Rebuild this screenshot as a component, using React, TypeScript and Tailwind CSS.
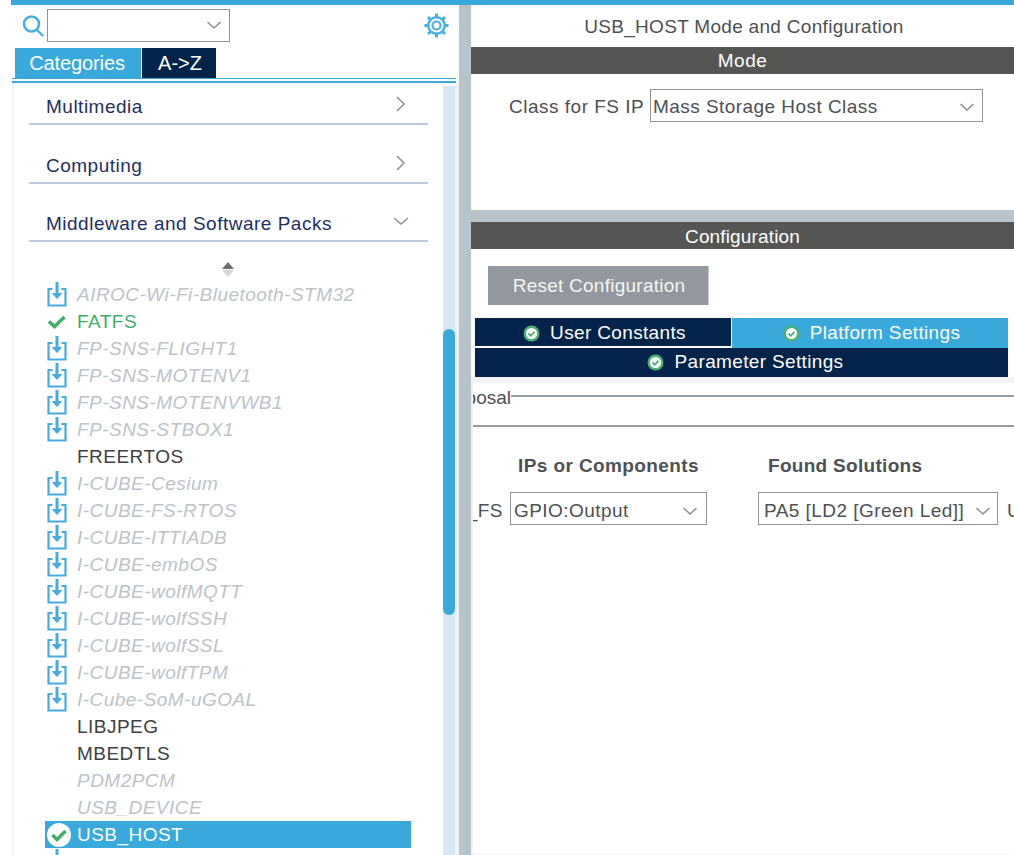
import React from 'react';

const font = { fontFamily: '"Liberation Sans", Arial, sans-serif' };

type Kind = 'pack' | 'ok' | 'plain' | 'off' | 'selected';

const items: { name: string; kind: Kind }[] = [
  { name: 'AIROC-Wi-Fi-Bluetooth-STM32', kind: 'pack' },
  { name: 'FATFS', kind: 'ok' },
  { name: 'FP-SNS-FLIGHT1', kind: 'pack' },
  { name: 'FP-SNS-MOTENV1', kind: 'pack' },
  { name: 'FP-SNS-MOTENVWB1', kind: 'pack' },
  { name: 'FP-SNS-STBOX1', kind: 'pack' },
  { name: 'FREERTOS', kind: 'plain' },
  { name: 'I-CUBE-Cesium', kind: 'pack' },
  { name: 'I-CUBE-FS-RTOS', kind: 'pack' },
  { name: 'I-CUBE-ITTIADB', kind: 'pack' },
  { name: 'I-CUBE-embOS', kind: 'pack' },
  { name: 'I-CUBE-wolfMQTT', kind: 'pack' },
  { name: 'I-CUBE-wolfSSH', kind: 'pack' },
  { name: 'I-CUBE-wolfSSL', kind: 'pack' },
  { name: 'I-CUBE-wolfTPM', kind: 'pack' },
  { name: 'I-Cube-SoM-uGOAL', kind: 'pack' },
  { name: 'LIBJPEG', kind: 'plain' },
  { name: 'MBEDTLS', kind: 'plain' },
  { name: 'PDM2PCM', kind: 'off' },
  { name: 'USB_DEVICE', kind: 'off' },
  { name: 'USB_HOST', kind: 'selected' },
];

const Caret = () => (
  <svg width="16" height="10" viewBox="0 0 16 10" fill="none" stroke="#8c9196" strokeWidth="1.6">
    <path d="M1.5 2 L8 8 L14.5 2" />
  </svg>
);

const PackIcon = () => (
  <svg width="20" height="25" viewBox="0 0 20 25" fill="none" stroke="#46abe0" strokeWidth="2.2">
    <path d="M5.5 7 H1.5 V23.5 H18.5 V7 H14.5" />
    <path d="M10 0 V14" strokeWidth="3" />
    <path d="M5.5 11.5 L10 16.5 L14.5 11.5 Z" fill="#46abe0" strokeWidth="1" />
  </svg>
);

const Tick = () => (
  <svg width="20" height="14" viewBox="0 0 20 14" fill="none" stroke="#3fae68" strokeWidth="3.6">
    <path d="M2 6.5 L7.5 11.5 L17.5 2" />
  </svg>
);

const RoundTick = ({ big }: { big?: boolean }) =>
  big ? (
    <svg width="26" height="26" viewBox="0 0 26 26" fill="none" className="ml-[-1px]">
      <circle cx="13" cy="13" r="12" fill="#fff" />
      <path d="M6.5 13 L11 17.5 L19.5 9" stroke="#3fae68" strokeWidth="3.4" />
    </svg>
  ) : (
    <svg width="17" height="17" viewBox="0 0 17 17" fill="none">
      <circle cx="8.5" cy="8.5" r="8" fill="#49b173" />
      <circle cx="8.5" cy="8.5" r="5.6" fill="#fff" />
      <path d="M5.5 8.5 L7.8 10.8 L11.5 6.8" stroke="#49b173" strokeWidth="1.8" />
    </svg>
  );

const Category = ({ label, open }: { label: string; open?: boolean }) => (
  <div className="ml-[15px] w-[399px] h-[59px] flex items-end justify-between border-b-2 border-[#bccbdc] pb-[4px] pl-[17px] pr-[19px]">
    <span className="text-[19px] tracking-[0.5px] leading-[24px] text-[#1f2f5f] whitespace-nowrap">{label}</span>
    <svg className="mb-[7px]" width="16" height="16" viewBox="0 0 16 16" fill="none" stroke="#8c9196" strokeWidth="1.5">
      {open ? <path d="M1 5 L8 11 L15 5" /> : <path d="M4 1 L11 8 L4 15" />}
    </svg>
  </div>
);

const ListRow = ({ name, kind }: { name: string; kind: Kind }) => {
  const text =
    kind === 'pack' || kind === 'off'
      ? 'italic text-[#bcc3c9]'
      : kind === 'ok'
        ? 'text-[#3fae68]'
        : kind === 'selected'
          ? 'text-white'
          : 'text-[#3d4043]';
  return (
    <div className={`h-[27px] flex items-center text-[19px] tracking-[0.47px] ${kind === 'selected' ? 'bg-[#39a9dc]' : ''}`}>
      <span className="w-[32px] flex justify-start shrink-0 pl-[2px]">
        {kind === 'pack' && <PackIcon />}
        {kind === 'ok' && <Tick />}
        {kind === 'selected' && <RoundTick big />}
      </span>
      <span className={`${text} pt-[2px] whitespace-nowrap`}>{name}</span>
    </div>
  );
};

const Select = ({ value, className, pad }: { value: string; className: string; pad: string }) => (
  <div className={`h-[33px] border border-[#8f9498] bg-white flex items-center justify-between text-[19px] tracking-[0.45px] text-[#4d5054] shrink-0 ${className} ${pad}`}>
    <span className="whitespace-nowrap">{value}</span>
    <Caret />
  </div>
);

export default function App() {
  return (
    <div className="w-[1014px] h-[855px] overflow-hidden bg-white flex flex-col" style={font}>
      <div className="ml-[11px] h-[5px] bg-[#39a9dc] shrink-0" />
      <div className="flex flex-1 min-h-0">
        {/* Left panel */}
        <div className="w-[459px] shrink-0 flex flex-col">
          <div className="h-[43px] shrink-0 flex items-center pl-[22px] pr-[10px]">
            <svg width="22" height="22" viewBox="0 0 22 22" fill="none" stroke="#46b0e2" className="mt-[-2px]">
              <circle cx="9.5" cy="9" r="7.5" strokeWidth="2.6" />
              <path d="M15 15 L21 21" strokeWidth="2.4" />
            </svg>
            <div className="ml-[3px] w-[183px] h-[33px] mt-[-3px] border border-[#8f9498] flex items-center justify-end pr-[7px]">
              <Caret />
            </div>
            <svg className="ml-auto mt-[-3px]" width="25" height="25" viewBox="0 0 25 25" fill="none" stroke="#46b0e2">
              <circle cx="12.5" cy="12.5" r="4" strokeWidth="2.2" />
              <circle cx="12.5" cy="12.5" r="8.2" strokeWidth="2.4" />
              <path d="M12.5 0.5 V4 M12.5 21 V24.5 M0.5 12.5 H4 M21 12.5 H24.5 M4 4 L6.5 6.5 M18.5 18.5 L21 21 M21 4 L18.5 6.5 M6.5 18.5 L4 21" strokeWidth="3" />
            </svg>
          </div>
          <div className="h-[30px] shrink-0 ml-[15px] flex gap-[1px] text-[20px] text-white">
            <div className="w-[126px] bg-[#39a9dc] flex items-center justify-center tracking-[-0.1px] pr-[2px]">Categories</div>
            <div className="w-[74px] bg-[#03234b] flex items-center justify-center pl-[2px]">{'A->Z'}</div>
          </div>
          <div className="shrink-0 ml-[12px] mr-[3px] h-[5px] border-t border-b-2 border-[#39a9dc]" />
          <div className="flex-1 min-h-0 flex">
            <div className="w-[2px] ml-[12px] bg-[#f1f3f5] shrink-0" />
            <div className="w-[429px] min-w-0 overflow-hidden">
              <div className="mt-[-17px]">
                <Category label="Multimedia" />
                <Category label="Computing" />
                <div className="mt-[-1px]">
                  <Category label="Middleware and Software Packs" open />
                </div>
              </div>
              <div className="h-[39px] flex flex-col items-center justify-center gap-[1px] pr-[2px] pt-[16px]">
                <div className="w-0 h-0 border-x-[6px] border-x-transparent border-b-[7px] border-b-[#6d7175]" />
                <div className="w-0 h-0 border-x-[6px] border-x-transparent border-t-[7px] border-t-[#d5d8da]" />
              </div>
              <div className="ml-[31px] w-[366px]">
                {items.map((i) => (
                  <ListRow key={i.name} name={i.name} kind={i.kind} />
                ))}
                <ListRow name="" kind="pack" />
              </div>
            </div>
            <div className="w-[12px] shrink-0 bg-[#d6e6f5] flex flex-col mt-[3px]">
              <div className="h-[243px] shrink-0" />
              <div className="h-[286px] shrink-0 rounded-[6px] bg-[#39a9dc]" />
            </div>
            <div className="w-[4px] shrink-0 bg-[#eef1f3]" />
          </div>
        </div>

        {/* Splitter */}
        <div className="w-[12px] shrink-0 bg-[#b8c4cc]" />

        {/* Right panel */}
        <div className="flex-1 min-w-0 flex flex-col text-[#4d5054]">
          <div className="h-[42px] shrink-0 flex items-center justify-center text-[19px] tracking-[0.3px] pt-[2px] pl-[3px]">
            USB_HOST Mode and Configuration
          </div>
          <div className="h-[27px] shrink-0 bg-[#555654] text-white flex items-center justify-center text-[19px] tracking-[0.5px] pt-[1px]">Mode</div>
          <div className="h-[136px] shrink-0 flex items-start pt-[15px] pl-[38px]">
            <span className="text-[19px] tracking-[0.5px] leading-[35px] w-[141px] whitespace-nowrap">Class for FS IP</span>
            <Select value="Mass Storage Host Class" className="w-[333px]" pad="pl-[2px] pr-[7px] pt-[3px]" />
          </div>
          <div className="h-[12px] shrink-0 bg-[#b8c4cc]" />
          <div className="h-[27px] shrink-0 bg-[#555654] text-white flex items-center justify-center text-[19px] tracking-[0.15px] pt-[3px]">Configuration</div>
          <div className="h-[17px] shrink-0" />
          <div className="ml-[17px] w-[221px] h-[39px] shrink-0 bg-[#92989d] border-r border-[#c4c8cb] text-[#f4f5f5] flex items-center justify-center text-[19px] tracking-[0.25px] pt-[2px] pl-[2px]">
            Reset Configuration
          </div>
          <div className="h-[13px] shrink-0" />
          <div className="ml-[4px] w-[533px] shrink-0 text-white text-[19px] tracking-[0.35px]">
            <div className="flex h-[30px] gap-[1px]">
              <div className="w-[256px] h-[28px] bg-[#03234b] flex items-center justify-center gap-[10px] pl-[3px] pt-[3px]">
                <RoundTick />
                User Constants
              </div>
              <div className="flex-1 bg-[#39a9dc] flex items-center justify-center gap-[10px] pl-[3px]">
                <RoundTick />
                Platform Settings
              </div>
            </div>
            <div className="h-[29px] bg-[#03234b] flex items-center justify-center gap-[11px] pl-[7px]">
              <RoundTick />
              Parameter Settings
            </div>
          </div>
          <div className="flex-1 min-h-0 bg-[#f1f3f5] pt-[6px] pl-[2px] pb-[1px]">
            <div className="h-full bg-white overflow-hidden">
              <div className="flex items-start h-[30px] pt-[5px]">
                <span className="w-[38px] shrink-0 overflow-hidden flex justify-end text-[19px] leading-[20px] whitespace-nowrap">
                  <span>Proposal</span>
                </span>
                <div className="flex-1 border-t-2 border-[#989da1] mt-[7px]" />
              </div>
              <div className="border-t-2 border-[#989da1] mt-[12px]" />
              <div className="mt-[27px] flex text-[19px] font-bold tracking-[0.4px] leading-[24px]">
                <span className="ml-[45px] w-[250px] whitespace-nowrap">IPs or Components</span>
                <span className="whitespace-nowrap tracking-[0.3px]">Found Solutions</span>
              </div>
              <div className="mt-[13px] flex items-center text-[19px] tracking-[0.5px]">
                <span className="w-[37px] shrink-0 pr-[7px] pt-[6px] whitespace-nowrap overflow-hidden flex justify-end">_FS</span>
                <Select value="GPIO:Output" className="w-[197px]" pad="pl-[3px] pr-[8px] pt-[6px]" />
                <div className="w-[51px] shrink-0" />
                <Select value="PA5 [LD2 [Green Led]]" className="w-[240px]" pad="pl-[5px] pr-[6px] pt-[6px]" />
                <span className="ml-[9px] pt-[6px]">U</span>
              </div>
            </div>
          </div>
        </div>
      </div>
    </div>
  );
}
